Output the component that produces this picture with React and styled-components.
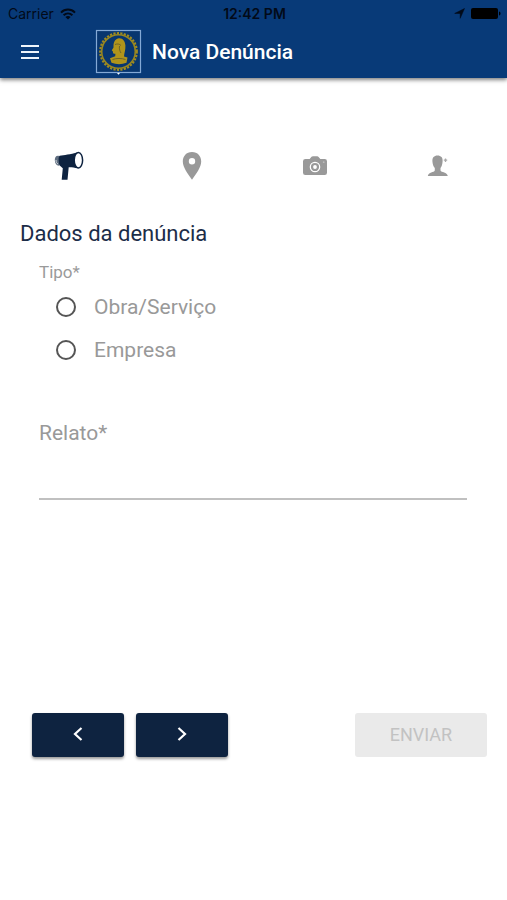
import React, { useState } from 'react';
import styled, { createGlobalStyle } from 'styled-components';

const GlobalStyle = createGlobalStyle`
  * { box-sizing: border-box; }
  body {
    margin: 0;
    background: #fff;
    font-family: Roboto, "Liberation Sans", sans-serif;
  }
  button, input, textarea { font: inherit; }
`;

const Page = styled.div`
  min-height: 100vh;
  display: flex;
  flex-direction: column;
`;

const Header = styled.header`
  background: #083a78;
  color: #fff;
  box-shadow: 0 2px 4px rgba(0, 0, 0, 0.5);
`;

const StatusBar = styled.div`
  display: grid;
  grid-template-columns: 1fr auto 1fr;
  align-items: center;
  height: 27px;
  padding: 0 6px 0 8px;
  color: #020a18;
  font: 400 14px/27px Inter, "Liberation Sans", sans-serif;
`;

const StatusGroup = styled.div`
  display: flex;
  align-items: center;
  gap: 6px;
  justify-content: ${(p) => (p.$end ? 'flex-end' : 'flex-start')};
`;

const Clock = styled.time`
  font-weight: 600;
`;

const Toolbar = styled.div`
  display: flex;
  align-items: center;
  height: 51px;
  padding: 0 20px 2px;
`;

const MenuButton = styled.button`
  display: flex;
  width: 20px;
  margin-right: 55px;
  padding: 0;
  border: 0;
  background: none;
  color: #eef4fb;
`;

const Title = styled.h1`
  margin: 0 0 0 10px;
  font-size: 21px;
  font-weight: 500;
  line-height: 24px;
`;

const Steps = styled.nav`
  display: grid;
  grid-template-columns: repeat(4, 1fr);
  padding: 68px 7px 0;
`;

const Step = styled.button`
  display: flex;
  align-items: center;
  justify-content: center;
  height: 40px;
  padding: 0;
  border: 0;
  background: none;
  color: ${(p) => (p.$active ? '#0e2340' : '#999')};
`;

const Form = styled.form`
  display: flex;
  flex-direction: column;
`;

const Heading = styled.h2`
  margin: 34px 20px 0;
  color: #1c2d48;
  font-size: 22px;
  font-weight: 400;
  line-height: 28px;
`;

const Options = styled.fieldset`
  display: flex;
  flex-direction: column;
  margin: 14px 39px 0;
  padding: 0;
  border: 0;
`;

const Legend = styled.legend`
  margin-bottom: 3px;
  padding: 0;
  color: #9a9a9a;
  font-size: 17px;
  line-height: 20px;
`;

const Option = styled.label`
  display: flex;
  align-items: center;
  gap: 18px;
  height: 43px;
  padding-left: 17px;
  color: #999;
  font-size: 21px;
`;

const Radio = styled.input`
  appearance: none;
  width: 20px;
  height: 20px;
  margin: 0;
  border: 2px solid #555;
  border-radius: 50%;
  background: #fff;
  &:checked { box-shadow: inset 0 0 0 3px #fff; background: #0e2340; }
`;

const Field = styled.div`
  display: flex;
  flex-direction: column;
  margin: 49px 40px 0 39px;
`;

const FieldLabel = styled.label`
  color: #999;
  font-size: 21px;
  line-height: 26px;
`;

const TextArea = styled.textarea`
  height: 54px;
  padding: 16px 0 4px;
  border: 0;
  border-bottom: 2px solid #c0c0c0;
  background: none;
  color: #333;
  font-size: 21px;
  resize: none;
  outline: 0;
`;

const Actions = styled.div`
  display: flex;
  gap: 12px;
  margin: 213px 20px 40px 32px;
`;

const Button = styled.button`
  display: flex;
  align-items: center;
  justify-content: center;
  width: 92px;
  height: 44px;
  padding: 0 0 2px;
  border: 0;
  border-radius: 3px;
  background: #0e2340;
  color: #fff;
  box-shadow: 0 2px 3px rgba(0, 0, 0, 0.4);
`;

const SubmitButton = styled(Button)`
  width: 132px;
  margin-left: auto;
  background: #eaeaea;
  color: #c2c2c2;
  box-shadow: none;
  font-size: 18px;
`;

const WifiIcon = () => (
  <svg width="16" height="12" viewBox="0 0 16 12" fill="none" stroke="currentColor" strokeWidth="2" aria-hidden="true">
    <path d="M1 4.6C5 .6 11 .6 15 4.6" />
    <path d="M3.6 7.3c2.600-2.500 6.200-2.500 8.800 0" />
    <path d="M8 11.6 5.4 9c1.500-1.300 3.700-1.300 5.200 0Z" fill="currentColor" stroke="none" />
  </svg>
);

const LocationIcon = () => (
  <svg width="11" height="11" viewBox="0 0 11 11" fill="currentColor" aria-hidden="true">
    <path d="M10.500.500 6.200 10.300V5.500L.7 5.400Z" stroke="currentColor" strokeWidth=".5" />
  </svg>
);

const BatteryIcon = () => (
  <svg width="30" height="11" viewBox="0 0 30 11" fill="#000" aria-hidden="true">
    <rect width="27" height="11" rx="2" />
    <path d="M28 3.500c2 .3 2 3.700 0 4Z" />
  </svg>
);

const MenuIcon = () => (
  <svg width="20" height="14" viewBox="0 0 20 14" fill="currentColor" aria-hidden="true">
    <path d="M1 0h18v2H1ZM1 6h18v2H1ZM1 12h18v2H1Z" />
  </svg>
);

const Crest = () => (
  <svg width="47" height="46" viewBox="0 0 47 46" role="img" aria-label="Brasão">
    <rect x="1.500" y="1.500" width="44" height="42" fill="#08366f" stroke="#84a9d6" strokeWidth="1.200" />
    <circle cx="23.500" cy="22.500" r="18.300" fill="none" stroke="#a18c20" strokeWidth="2.200" strokeDasharray="2.200 1.300" />
    <circle cx="23.500" cy="22.500" r="16.800" fill="none" stroke="#98861f" strokeWidth="1.600" />
    <path
      d="M18.500 17c0-4.500 2.200-7.500 5.500-7.800 4-.2 6.200 3.300 6.400 7.300.2 4.500-1.200 7.500-1.400 11l3.500 1-1 5.300c-5 1.800-10 1.800-15 0l-1.500-4.600 5.200-2 .2-2.500c-1.900.2-2.700-.5-2.400-2l-1.200-1.500 1.700-2.700Z"
      fill="#b0941b"
    />
    <path d="M20 15.500c2.500-1 4.500-.5 6 1M24.500 17c-.5 3 .5 5.500 1.500 7M17.500 30.500c4-1.400 9-1.400 13 0" fill="none" stroke="#665f2a" strokeWidth=".9" />
    <path d="M22 44h3l-1.500 1.800Z" fill="#fff" />
  </svg>
);

const MegaphoneIcon = () => (
  <svg width="30" height="30" viewBox="0 0 30 30" fill="currentColor" aria-hidden="true">
    <path d="M4.500 4.800C1.800 4.500.8 6.800.8 9.200c.1 2.800 1.400 5.200 4.200 5.500l1-.6C4 11.800 4 8 6 5.500Z" fill="#5f6e80" />
    <path d="M2 9c0 2 .8 3.600 2 4" fill="none" stroke="#fff" strokeWidth=".7" />
    <path d="M5.600 4.700C10.500 4.200 15.500 3.500 24 1.300v16c-3.800-.6-6.800-1.200-9.300-1l-1.200 12.500H7.700l1.100-11.500-1.700-1.600C4 13.200 3.500 8 5.600 4.700Z" />
    <ellipse cx="24.400" cy="9.200" rx="4.200" ry="7.700" fill="#fff" stroke="currentColor" strokeWidth="1.500" />
  </svg>
);

const PinIcon = () => (
  <svg width="20" height="28" viewBox="0 0 20 28" fill="currentColor" aria-hidden="true">
    <path fillRule="evenodd" d="M10 0C4.300 0 .8 4.200.8 9.400.8 15.500 6 21.500 10 27.800c4-6.300 9.200-12.300 9.200-18.400C19.200 4.200 15.700 0 10 0Zm0 6a3.200 3.200 0 1 1 0 6.400A3.200 3.200 0 0 1 10 6Z" />
  </svg>
);

const CameraIcon = () => (
  <svg width="26" height="20" viewBox="0 0 26 20" fill="currentColor" aria-hidden="true">
    <path d="M3.500 3h4.200L9.500.8Q10 .3 11 .3h4.200q.9 0 1.400.6L18.300 3h4.400q2.300 0 2.300 2.300v11.400q0 2.300-2.300 2.300H3.300Q1 19 1 16.700V5.300Q1 3 3.500 3Z" />
    <circle cx="13" cy="11" r="4.700" fill="none" stroke="#fff" strokeWidth="1.200" />
    <circle cx="13" cy="11" r="1.900" fill="#fff" />
    <circle cx="21.700" cy="6.200" r=".9" fill="#bbb" />
  </svg>
);

const PersonIcon = () => (
  <svg width="22" height="22" viewBox="0 0 22 22" fill="currentColor" aria-hidden="true">
    <path d="M10.500.5c3.600 0 5.400 2.200 5.100 5.700-.2 3-.8 5.200-2.100 6.700v2.700c.9 2 6.600 1.600 7.300 5.400H.8c.7-3.800 6.200-3.400 7-5.400v-2.700C6.400 11.400 5.600 9.200 5.400 6.200 5.200 2.700 7 .5 10.500.5Z" />
    <path d="M18.500 3.500v3.400M16.800 5.200h3.400" fill="none" stroke="#aaa" strokeWidth="1.300" />
  </svg>
);

const Chevron = ({ next }) => (
  <svg width="12" height="16" viewBox="0 0 12 16" fill="none" stroke="currentColor" strokeWidth="2.200" aria-hidden="true">
    <path d={next ? 'M2.500 2 9 8l-6.500 6' : 'M9.500 2 3 8l6.500 6'} />
  </svg>
);

const steps = [
  { name: 'Denúncia', Icon: MegaphoneIcon },
  { name: 'Local', Icon: PinIcon },
  { name: 'Fotos', Icon: CameraIcon },
  { name: 'Pessoa', Icon: PersonIcon },
];

const types = ['Obra/Serviço', 'Empresa'];

export default function App() {
  const [type, setType] = useState('');
  return (
    <Page>
      <GlobalStyle />
      <Header>
        <StatusBar>
          <StatusGroup>Carrier <WifiIcon /></StatusGroup>
          <Clock>12:42 PM</Clock>
          <StatusGroup $end><LocationIcon /><BatteryIcon /></StatusGroup>
        </StatusBar>
        <Toolbar>
          <MenuButton type="button" aria-label="Menu"><MenuIcon /></MenuButton>
          <Crest />
          <Title>Nova Denúncia</Title>
        </Toolbar>
      </Header>
      <main>
        <Steps aria-label="Etapas">
          {steps.map(({ name, Icon }, i) => (
            <Step key={name} type="button" aria-label={name} $active={i === 0}><Icon /></Step>
          ))}
        </Steps>
        <Form onSubmit={(e) => e.preventDefault()}>
          <Heading>Dados da denúncia</Heading>
          <Options>
            <Legend>Tipo*</Legend>
            {types.map((t) => (
              <Option key={t}>
                <Radio type="radio" name="tipo" value={t} checked={type === t} onChange={() => setType(t)} />
                {t}
              </Option>
            ))}
          </Options>
          <Field>
            <FieldLabel htmlFor="relato">Relato*</FieldLabel>
            <TextArea id="relato" />
          </Field>
          <Actions>
            <Button type="button" aria-label="Anterior"><Chevron /></Button>
            <Button type="button" aria-label="Próximo"><Chevron next /></Button>
            <SubmitButton type="submit" disabled>ENVIAR</SubmitButton>
          </Actions>
        </Form>
      </main>
    </Page>
  );
}
